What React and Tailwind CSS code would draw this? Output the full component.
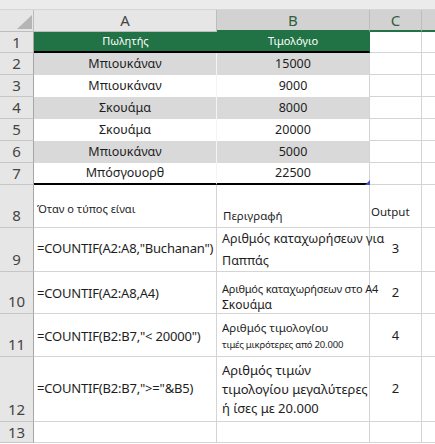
import React from "react";

const RH = ({ n, bottom }) => (
  <div
    className={
      "w-[34px] shrink-0 bg-[#e6e6e6] border-r border-r-[#a6a6a6] border-b border-b-[#c6c6c6] flex justify-center text-[15px] text-[#444] leading-none " +
      (bottom ? "items-end pb-[4px]" : "items-center")
    }
  >
    {n}
  </div>
);

const grid = "border-r border-b border-[#d4d4d4]";

function DataRow({ h, n, a, b, fill, last }) {
  const bg = fill ? "bg-[#d9d9d9]" : "bg-white";
  const bb = last ? "border-b-2 border-b-black" : "";
  return (
    <div className={"flex " + h}>
      <RH n={n} />
      <div className={"w-[183px] shrink-0 flex items-center justify-center text-[12.5px] border-r border-r-[#f4f4f4] " + bg + " " + bb}>{a}</div>
      <div className={"relative w-[153px] shrink-0 flex items-center justify-center text-[12.5px] border-r border-r-[#d4d4d4] " + bg + " " + bb}>
        {b}
        {last && (
          <svg className="absolute right-[-1px] bottom-[-2px]" width="5" height="5" viewBox="0 0 5 5">
            <polygon points="5,0 5,5 0,5" fill="#3f51c8" />
          </svg>
        )}
      </div>
      <div className={"w-[52px] shrink-0 " + grid}></div>
      <div className="flex-1 border-b border-[#d4d4d4]"></div>
    </div>
  );
}

export default function App() {
  return (
    <div className="w-[435px] h-[444px] overflow-hidden bg-white font-['Noto_Sans',sans-serif] text-[#1e1e1e]">
      <div className="h-[10px] bg-[#ebebeb] border-b border-[#d6d6d6]" />
      {/* column header */}
      <div className="flex h-[22px]">
        <div className="relative w-[34px] shrink-0 bg-[#e6e6e6] border-r border-b border-[#bdbdbd]">
          <svg className="absolute left-[17px] top-[5px]" width="15" height="14" viewBox="0 0 15 14">
            <polygon points="15,0 15,14 0,14" fill="#b5b5b5" />
          </svg>
        </div>
        <div className="w-[183px] shrink-0 bg-[#e6e6e6] border-r border-r-[#bdbdbd] border-b border-b-[#bdbdbd] flex items-center justify-center text-[15px] text-[#444] leading-none">A</div>
        <div className="w-[153px] shrink-0 bg-[#d2d2d2] border-r border-r-[#bdbdbd] border-b-2 border-b-[#217346] flex items-center justify-center text-[15px] text-[#2f5f3f] leading-none">B</div>
        <div className="w-[52px] shrink-0 bg-[#d2d2d2] border-r border-r-[#bdbdbd] border-b-2 border-b-[#217346] flex items-center justify-center text-[15px] text-[#2f5f3f] leading-none">C</div>
        <div className="flex-1 bg-[#d2d2d2] border-b-2 border-b-[#217346]"></div>
      </div>

      {/* row 1 */}
      <div className="flex h-[21px]">
        <RH n="1" />
        <div className="w-[183px] shrink-0 bg-[#217346] border-b-2 border-b-black flex items-center justify-center text-[11px] text-white">Πωλητής</div>
        <div className="w-[153px] shrink-0 bg-[#217346] border-b-2 border-b-black border-r border-r-[#217346] flex items-center justify-center text-[11px] text-white">Τιμολόγιο</div>
        <div className={"w-[52px] shrink-0 " + grid}></div>
        <div className="flex-1 border-b border-[#d4d4d4]"></div>
      </div>
      <DataRow h="h-[22px]" n="2" a="Μπιουκάναν" b="15000" fill />
      <DataRow h="h-[22px]" n="3" a="Μπιουκάναν" b="9000" />
      <DataRow h="h-[22px]" n="4" a="Σκουάμα" b="8000" fill />
      <DataRow h="h-[22px]" n="5" a="Σκουάμα" b="20000" />
      <DataRow h="h-[22px]" n="6" a="Μπιουκάναν" b="5000" fill />
      <DataRow h="h-[22px]" n="7" a="Μπόσγουορθ" b="22500" last />

      {/* row 8 */}
      <div className="flex h-[43px]">
        <RH n="8" bottom />
        <div className={"w-[183px] shrink-0 flex items-end pb-[10px] pl-[3px] text-[11px] " + grid}>Όταν ο τύπος είναι</div>
        <div className={"w-[153px] shrink-0 flex items-end pb-[3px] pl-[6px] text-[11.5px] " + grid}>Περιγραφή</div>
        <div className={"w-[52px] shrink-0 flex items-end pb-[7px] pl-[1px] text-[11.5px] " + grid}>Output</div>
        <div className="flex-1 border-b border-[#d4d4d4]"></div>
      </div>

      {/* row 9 */}
      <div className="flex h-[44px]">
        <RH n="9" bottom />
        <div className={"w-[183px] shrink-0 flex items-center pl-[3px] pb-[1px] text-[13px] tracking-[-0.2px] whitespace-nowrap " + grid}>=COUNTIF(A2:A8,"Buchanan")</div>
        <div className={"relative z-10 w-[153px] shrink-0 flex flex-col justify-center pl-[5px] text-[12.5px] leading-[22px] whitespace-nowrap " + grid}>
          <div>Αριθμός καταχωρήσεων για</div>
          <div>Παππάς</div>
        </div>
        <div className={"w-[52px] shrink-0 flex items-center justify-center pb-[1px] text-[13px] " + grid}>3</div>
        <div className="flex-1 border-b border-[#d4d4d4]"></div>
      </div>

      {/* row 10 */}
      <div className="flex h-[42px]">
        <RH n="10" bottom />
        <div className={"w-[183px] shrink-0 flex items-center pl-[3px] pt-[2px] text-[13px] tracking-[-0.2px] whitespace-nowrap " + grid}>=COUNTIF(A2:A8,A4)</div>
        <div className={"relative z-10 w-[153px] shrink-0 flex flex-col justify-start pt-[9px] pl-[5px] whitespace-nowrap " + grid}>
          <div className="text-[11px] leading-[16px] tracking-[-0.2px]">Αριθμός καταχωρήσεων στο A4</div>
          <div className="text-[12px] leading-[16px]">Σκουάμα</div>
        </div>
        <div className={"w-[52px] shrink-0 flex items-center justify-center pt-[1px] text-[13px] " + grid}>2</div>
        <div className="flex-1 border-b border-[#d4d4d4]"></div>
      </div>

      {/* row 11 */}
      <div className="flex h-[43px]">
        <RH n="11" bottom />
        <div className={"w-[183px] shrink-0 flex items-start pt-[13px] pl-[3px] text-[13px] tracking-[-0.2px] whitespace-nowrap " + grid}>=COUNTIF(B2:B7,"&lt; 20000")</div>
        <div className={"w-[153px] shrink-0 flex flex-col justify-start pt-[5px] pl-[5px] whitespace-nowrap " + grid}>
          <div className="text-[11.5px] leading-[18px]">Αριθμός τιμολογίου</div>
          <div className="text-[9.5px] leading-[16px] tracking-[-0.2px]">τιμές μικρότερες από 20.000</div>
        </div>
        <div className={"w-[52px] shrink-0 flex items-start pt-[12px] justify-center text-[13px] " + grid}>4</div>
        <div className="flex-1 border-b border-[#d4d4d4]"></div>
      </div>

      {/* row 12 */}
      <div className="flex h-[65px]">
        <RH n="12" bottom />
        <div className={"w-[183px] shrink-0 flex items-center pl-[3px] text-[13px] tracking-[-0.2px] whitespace-nowrap " + grid}>=COUNTIF(B2:B7,"&gt;="&amp;B5)</div>
        <div className={"w-[153px] shrink-0 flex flex-col justify-center pl-[5px] text-[13px] leading-[19px] whitespace-nowrap " + grid}>
          <div>Αριθμός τιμών</div>
          <div>τιμολογίου μεγαλύτερες</div>
          <div>ή ίσες με 20.000</div>
        </div>
        <div className={"w-[52px] shrink-0 flex items-center justify-center text-[13px] " + grid}>2</div>
        <div className="flex-1 border-b border-[#d4d4d4]"></div>
      </div>

      {/* row 13 */}
      <div className="flex h-[21px]">
        <RH n="13" />
        <div className={"w-[183px] shrink-0 " + grid}></div>
        <div className={"w-[153px] shrink-0 " + grid}></div>
        <div className={"w-[52px] shrink-0 " + grid}></div>
        <div className="flex-1 border-b border-[#d4d4d4]"></div>
      </div>
    </div>
  );
}
